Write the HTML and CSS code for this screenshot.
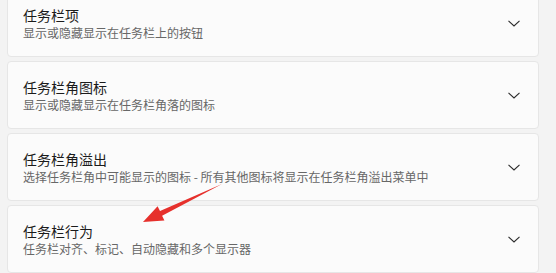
FILE: index.html
```html
<!DOCTYPE html>
<html lang="zh-CN">
<head>
<meta charset="utf-8">
<link rel="stylesheet" href="styles.css">
</head>
<body>
<div class="list">
  <div class="card">
    <div class="text">
      <div class="title">任务栏项</div>
      <div class="sub">显示或隐藏显示在任务栏上的按钮</div>
    </div>
    <svg class="chev" width="12" height="7" viewBox="0 0 12 7"><polyline points="0.5,0.8 6,6 11.5,0.8" fill="none" stroke="#2b2b2b" stroke-width="1.1"/></svg>
  </div>
  <div class="card">
    <div class="text">
      <div class="title">任务栏角图标</div>
      <div class="sub">显示或隐藏显示在任务栏角落的图标</div>
    </div>
    <svg class="chev" width="12" height="7" viewBox="0 0 12 7"><polyline points="0.5,0.8 6,6 11.5,0.8" fill="none" stroke="#2b2b2b" stroke-width="1.1"/></svg>
  </div>
  <div class="card">
    <div class="text">
      <div class="title">任务栏角溢出</div>
      <div class="sub">选择任务栏角中可能显示的图标 - 所有其他图标将显示在任务栏角溢出菜单中</div>
    </div>
    <svg class="chev" width="12" height="7" viewBox="0 0 12 7"><polyline points="0.5,0.8 6,6 11.5,0.8" fill="none" stroke="#2b2b2b" stroke-width="1.1"/></svg>
  </div>
  <div class="card">
    <div class="text">
      <div class="title">任务栏行为</div>
      <div class="sub">任务栏对齐、标记、自动隐藏和多个显示器</div>
    </div>
    <svg class="chev" width="12" height="7" viewBox="0 0 12 7"><polyline points="0.5,0.8 6,6 11.5,0.8" fill="none" stroke="#2b2b2b" stroke-width="1.1"/></svg>
  </div>
</div>
<svg class="arrow" width="556" height="273" viewBox="0 0 556 273">
  <polygon points="143,222 157.6,206.2 160,211.1 222,184 162.1,215.7 164.4,220.6" fill="#e6302c"/>
</svg>
</body>
</html>
```
FILE: styles.css
```css
html, body {
  margin: 0;
  padding: 0;
}
body {
  width: 556px;
  height: 273px;
  overflow: hidden;
  background: #f3f3f3;
  font-family: "Noto Sans CJK SC", "Noto Sans", sans-serif;
  position: relative;
}
.list {
  margin-top: -11px;
  padding-left: 7px;
  width: 532px;
  display: flex;
  flex-direction: column;
  gap: 4px;
}
.card {
  box-sizing: border-box;
  height: 68px;
  background: #fbfbfb;
  border: 1px solid #e6e6e6;
  border-radius: 4px;
  display: flex;
  align-items: center;
  padding-left: 15px;
  padding-right: 18px;
}
.text {
  flex: 1;
}
.title {
  font-size: 14px;
  line-height: 19px;
  color: #1b1b1b;
}
.sub {
  font-size: 12px;
  line-height: 16px;
  color: #676767;
}
.chev {
  display: block;
}
.arrow {
  position: absolute;
  left: 0;
  top: 0;
}
```
